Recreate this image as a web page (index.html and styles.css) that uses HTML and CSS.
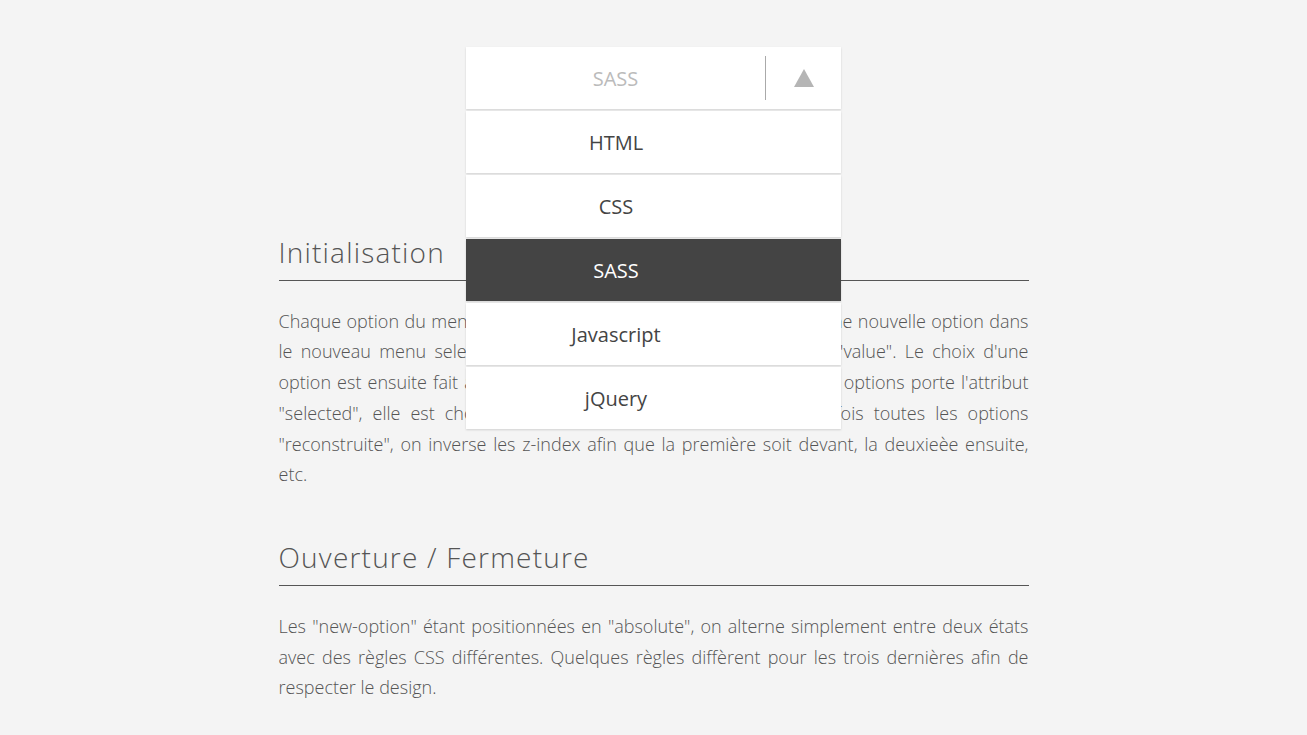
FILE: index.html
```html
<!DOCTYPE html>
<html lang="fr">
<head>
  <meta charset="UTF-8">
  <title>Select personnalisé</title>
  <link rel="stylesheet" href="styles.css">
</head>
<body>

<div class="page">
  <div class="select open">
    <div class="select-current">SASS</div>
    <div class="select-arrow"><span class="triangle"></span></div>
    <div class="new-options">
      <div class="new-option">HTML</div>
      <div class="new-option">CSS</div>
      <div class="new-option selected">SASS</div>
      <div class="new-option">Javascript</div>
      <div class="new-option">jQuery</div>
    </div>
  </div>

  <h2 class="title">Initialisation</h2>
  <p class="text">Chaque option du menu select d'origine est reprise pour en créer une nouvelle option dans le nouveau menu select, en conservant son texte et son attribut "value". Le choix d'une option est ensuite fait à la manière d'un select classique. Si une des options porte l'attribut "selected", elle est choisie par défaut et placée au début. Une fois toutes les options "reconstruite", on inverse les z-index afin que la première soit devant, la deuxieèe ensuite, etc.</p>

  <h2 class="title">Ouverture / Fermeture</h2>
  <p class="text">Les "new-option" étant positionnées en "absolute", on alterne simplement entre deux états avec des règles CSS différentes. Quelques règles diffèrent pour les trois dernières afin de respecter le design.</p>
</div>

</body>
</html>
```

FILE: styles.css
```css
body {
  margin: 0;
  background-color: #f4f4f4;
  font-family: "Open Sans", "Liberation Sans", sans-serif;
  color: #555;
}

.page {
  width: 750px;
  margin: 0 auto;
  padding-top: 47px;
}

/* Select */

.select {
  position: relative;
  width: 375px;
  height: 62px;
  margin: 0 auto 127px;
  display: flex;
  background-color: white;
  box-shadow: 0 1px 2px rgba(0,0,0,0.15);
  user-select: none;
}

.select-current {
  flex: 1;
  display: flex;
  align-items: center;
  justify-content: center;
  font-size: 20px;
  color: #bbb;
}

.select-arrow {
  width: 75px;
  margin: 9px 0;
  border-left: 1px solid #aaa;
  display: flex;
  align-items: center;
  justify-content: center;
}

.triangle {
  width: 0;
  height: 0;
  border-left: 10px solid transparent;
  border-right: 10px solid transparent;
  border-bottom: 18px solid #b5b5b5;
}

.new-options {
  position: absolute;
  top: 64px;
  left: 0;
  width: 100%;
  z-index: 1;
}

.new-option {
  height: 62px;
  margin-bottom: 2px;
  padding-right: 75px;
  display: flex;
  align-items: center;
  justify-content: center;
  background-color: white;
  box-shadow: 0 1px 2px rgba(0,0,0,0.15);
  font-size: 20px;
  color: #444;
  cursor: pointer;
}

.new-option.selected {
  background-color: #444;
  color: white;
}

/* Texte */

.title {
  margin: 0;
  padding-bottom: 10px;
  border-bottom: 1px solid #555;
  font-size: 28px;
  font-weight: 300;
  line-height: 1.2;
  letter-spacing: 1.2px;
}

.text {
  margin: 25px 0 51px;
  font-size: 18px;
  font-weight: 300;
  line-height: 1.71;
  text-align: justify;
}
```
